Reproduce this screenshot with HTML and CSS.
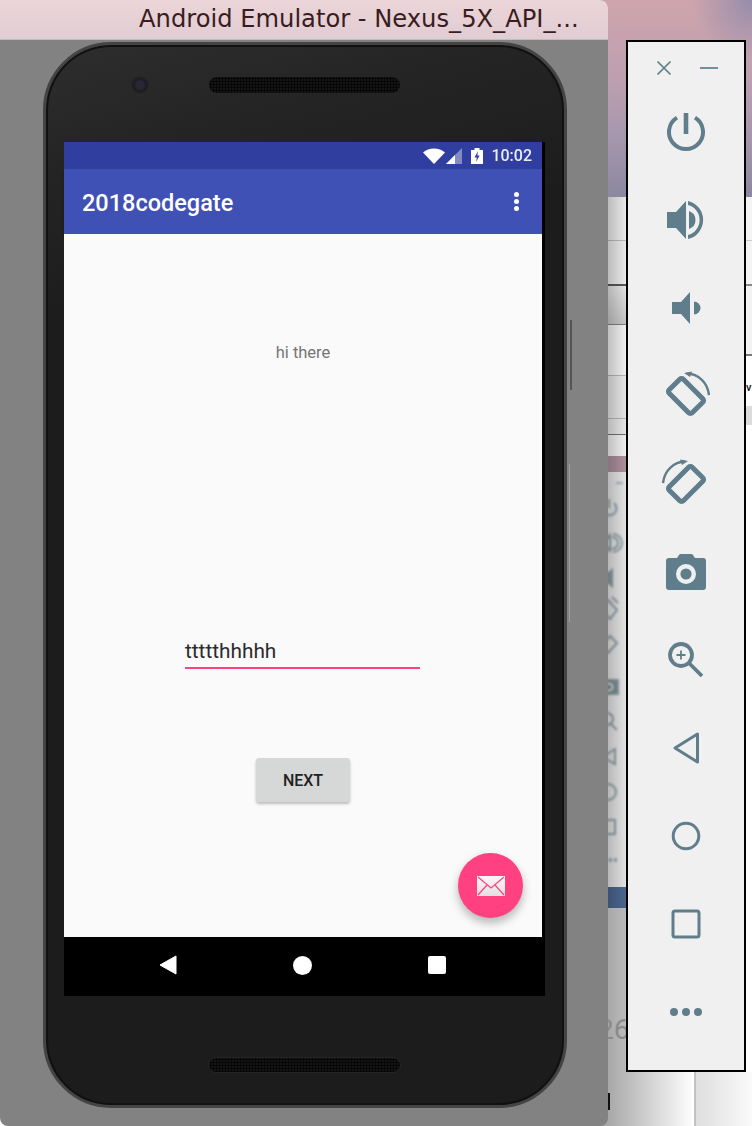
FILE: index.html
```html
<!DOCTYPE html>
<html lang="en">
<head>
    <meta charset="UTF-8">
    <title>Android Emulator - Nexus_5X_API</title>
    <link rel="stylesheet" href="styles.css">
</head>
<body>
    <div class="desktop">
        <!-- blurred stuff behind the windows -->
        <div class="backdrop">
            <div class="wallpaper"></div>
            <div class="behind-app">
                <div class="behind-left">
                    <div class="left-row lr-a"></div>
                    <div class="left-row lr-b"></div>
                    <div class="left-row lr-c"></div>
                    <div class="left-row lr-d"></div>
                    <div class="left-row lr-e"></div>
                    <div class="left-row lr-f"></div>
                    <div class="left-row lr-g"></div>
                    <div class="left-row lr-band"></div>
                    <div class="left-row lr-tools">
                        <svg class="ghost-tools" width="26" height="415" viewBox="0 0 26 415">
                            <path d="M16 11h7" stroke-width="1.5"/>
                            <path d="M5 31a7 7 0 1 0 9 0M9 27v9"/>
                            <path d="M2 66h6l2-4v18l-2-4H2zM12 65a6 6 0 0 1 0 12M13 62a9 9 0 0 1 0 18"/>
                            <path d="M4 101h5l3-3v16l-3-3H4z" fill="#5f7b88"/>
                            <path d="M8 128l9 10-7 9-9-10zM12 125l6 6"/>
                            <path d="M10 164l7 7-9 10-6-7z"/>
                            <path d="M0 208h18v14H0z" fill="#47626f"/>
                            <circle cx="9" cy="215" r="3.5" stroke="#e6e6e6"/>
                            <circle cx="7" cy="247" r="6"/>
                            <path d="M11 252l6 6"/>
                            <path d="M15 277v15l-12-7z"/>
                            <circle cx="8" cy="320" r="8"/>
                            <path d="M0 348h15v14H0z"/>
                            <path d="M4 388h14" stroke-dasharray="3 2" stroke-width="3"/>
                        </svg>
                    </div>
                    <div class="left-row lr-blue"></div>
                </div>
                <div class="behind-num">26</div>
                <div class="behind-tick"></div>
                <div class="behind-right">
                    <div class="right-row rr-a"></div>
                    <div class="right-row rr-b"></div>
                    <div class="right-row rr-c"></div>
                    <div class="right-row rr-d">
                        <span class="behind-letter">v</span>
                    </div>
                    <div class="right-row rr-e"></div>
                </div>
            </div>
        </div>

        <div class="emulator">
            <div class="titlebar">Android Emulator - Nexus_5X_API_...</div>
            <div class="emulator-body">
                <div class="side-key key-volume"></div>
                <div class="side-key key-power"></div>
                <div class="phone">
                    <div class="phone-top">
                        <div class="camera"></div>
                        <div class="speaker"></div>
                    </div>
                    <div class="screen">
                        <div class="status-bar">
                            <svg class="status-icon" width="22" height="16" viewBox="0 0 22 16"><path d="M0 4.500C3 2 6.800.6 11 .6s8 1.400 11 3.900L11 16z" fill="#fff"/></svg>
                            <svg class="status-icon" width="18" height="16" viewBox="0 0 18 16"><path d="M17 0v16H1z" fill="#fff" opacity=".4"/><path d="M10 7v9H1z" fill="#fff"/></svg>
                            <svg class="status-icon battery" width="12" height="16" viewBox="0 0 12 16"><path d="M0 2h3.500V0h5v2H12v14H0z" fill="#fff"/><path d="M7 3 3.500 9.500h2.300L5 14l3.600-6.500H6.300z" fill="#303f9f"/></svg>
                            <span class="clock">10:02</span>
                        </div>
                        <div class="app-bar">
                            <span class="app-title">2018codegate</span>
                            <div class="overflow-dots"><i></i><i></i><i></i></div>
                        </div>
                        <div class="content">
                            <p class="hello">hi there</p>
                            <div class="field">ttttthhhhh</div>
                            <button class="next-btn">NEXT</button>
                            <div class="fab">
                                <svg width="28" height="20" viewBox="0 0 28 20">
                                    <defs><linearGradient id="env" x1="0" y1="0" x2="0" y2="1"><stop offset="0" stop-color="#fdf6f8"/><stop offset="1" stop-color="#e2dfe0"/></linearGradient></defs>
                                    <path d="M0 0h28v20H0z" fill="url(#env)"/>
                                    <path d="M1 1 14 12 27 1M1 19l9-10M27 19l-9-10" fill="none" stroke="#ff4081" stroke-width="1.200"/>
                                </svg>
                            </div>
                        </div>
                        <div class="nav-bar">
                            <svg width="18" height="20" viewBox="0 0 18 20"><path d="M17 1v18L1 10z" fill="#fff" stroke="#fff" stroke-linejoin="round"/></svg>
                            <div class="nav-home"></div>
                            <div class="nav-recent"></div>
                        </div>
                    </div>
                    <div class="phone-bottom">
                        <div class="speaker"></div>
                    </div>
                </div>
            </div>
        </div>

        <div class="toolbar">
            <div class="win-controls">
                <svg width="16" height="16" viewBox="0 0 16 16"><path d="M1.500 1.500l13 13M14.500 1.500l-13 13" stroke="#607d8b" stroke-width="1.700" fill="none"/></svg>
                <svg width="18" height="16" viewBox="0 0 18 16"><path d="M0 8h18" stroke="#607d8b" stroke-width="1.700" fill="none"/></svg>
            </div>
            <div class="tool">
                <svg width="40" height="40" viewBox="0 0 40 40"><path d="M11 5.600A17 17 0 1 0 29 5.600" fill="none" stroke="#607d8b" stroke-width="4"/><path d="M20 1v21" stroke="#607d8b" stroke-width="4.600" fill="none"/></svg>
            </div>
            <div class="tool">
                <svg width="40" height="40" viewBox="0 0 40 40"><path d="M1 12h9L20 1v38L10 28H1z" fill="#607d8b"/><path d="M23 11a9.500 9.500 0 0 1 0 18z" fill="#607d8b"/><path d="M22 1a19.500 19.500 0 0 1 0 38v-4a15.500 15.500 0 0 0 0-30z" fill="#607d8b"/></svg>
            </div>
            <div class="tool">
                <svg width="30" height="34" viewBox="0 0 30 34"><path d="M1 11h9L19 1v32L10 23H1z" fill="#607d8b"/><path d="M23 10.500a6.500 6.500 0 0 1 0 13z" fill="#607d8b"/></svg>
            </div>
            <div class="tool">
                <svg width="48" height="50" viewBox="0 0 48 50"><rect x="14" y="8.750" width="20" height="32.500" rx="2.500" transform="rotate(-45 24 25)" fill="none" stroke="#607d8b" stroke-width="5"/><path d="M25 2.500C36 3 45.500 11 47 24" fill="none" stroke="#607d8b" stroke-width="2.400"/><path d="M22 2l8-1.500-2 5.500z" fill="#607d8b"/></svg>
            </div>
            <div class="tool">
                <svg width="48" height="50" viewBox="0 0 48 50"><rect x="14" y="8.750" width="20" height="32.500" rx="2.500" transform="rotate(45 24 25)" fill="none" stroke="#607d8b" stroke-width="5"/><path d="M23 2.500C12 3 2.500 11 1 24" fill="none" stroke="#607d8b" stroke-width="2.400"/><path d="M26 2l-8-1.500 2 5.500z" fill="#607d8b"/></svg>
            </div>
            <div class="tool">
                <svg width="40" height="36" viewBox="0 0 40 36"><path d="M3 4h8l2-3q.5-1 2-1h10q1.500 0 2 1l2 3h8a3 3 0 0 1 3 3v26a3 3 0 0 1-3 3H3a3 3 0 0 1-3-3V7a3 3 0 0 1 3-3z" fill="#607d8b"/><circle cx="20" cy="20" r="7.800" fill="none" stroke="#f0f0f0" stroke-width="4.400"/></svg>
            </div>
            <div class="tool">
                <svg width="36" height="36" viewBox="0 0 36 36"><circle cx="13" cy="13" r="11" fill="none" stroke="#607d8b" stroke-width="3.800"/><path d="M21 21l13 13" stroke="#607d8b" stroke-width="3.800" fill="none"/><path d="M13 8.500v9M8.500 13h9" stroke="#607d8b" stroke-width="1.800" fill="none"/></svg>
            </div>
            <div class="tool">
                <svg width="28" height="34" viewBox="0 0 28 34"><path d="M25.500 3v28L3 17z" fill="none" stroke="#607d8b" stroke-width="3" stroke-linejoin="round"/></svg>
            </div>
            <div class="tool">
                <svg width="30" height="30" viewBox="0 0 30 30"><circle cx="15" cy="15" r="12.800" fill="none" stroke="#607d8b" stroke-width="3"/></svg>
            </div>
            <div class="tool">
                <svg width="30" height="30" viewBox="0 0 30 30"><rect x="2" y="2" width="26" height="26" rx="2" fill="none" stroke="#607d8b" stroke-width="3"/></svg>
            </div>
            <div class="tool">
                <svg width="34" height="10" viewBox="0 0 34 10"><circle cx="5" cy="5" r="4" fill="#607d8b"/><circle cx="17" cy="5" r="4" fill="#607d8b"/><circle cx="29" cy="5" r="4" fill="#607d8b"/></svg>
            </div>
        </div>
    </div>
</body>
</html>
```

FILE: styles.css
```css
* {
    box-sizing: border-box;
}
html, body {
    margin: 0;
    height: 100%;
}
body {
    font-family: 'Roboto', sans-serif;
    overflow: hidden;
}
.desktop {
    position: relative;
    width: 752px;
    height: 1126px;
    overflow: hidden;
    background-color: #fff;
}

/* things behind the windows */
.backdrop {
    position: absolute;
    top: 0;
    left: 600px;
    width: 152px;
    height: 1126px;
}
.wallpaper {
    height: 197px;
    background:
        radial-gradient(circle at 100% 0, #958cab 0, rgba(149, 140, 171, 0) 60px),
        linear-gradient(180deg, #cfa5ac 0%, #bd9fb0 40%, #a596ad 70%, #8b889f 100%);
}
.behind-app {
    position: relative;
    height: 929px;
    background: linear-gradient(90deg, #a8a8a8 8px, #fff 94px, #c2c2c2 94px, #c2c2c2 96px, #dedede 96px, #fafafa 152px);
}
.behind-left {
    position: relative;
    width: 26px;
}
.behind-left::after {
    content: "";
    position: absolute;
    top: 0;
    bottom: 0;
    left: 0;
    width: 26px;
    background: linear-gradient(90deg, rgba(0, 0, 0, 0.24) 8px, rgba(0, 0, 0, 0.06) 26px);
}
.left-row {
    background-color: #f7f7f7;
}
.lr-a { height: 44px; border-bottom: 1px solid #c4c4c4; }
.lr-b { height: 45px; border-bottom: 2px solid #5c5c5c; }
.lr-c { height: 39px; background: linear-gradient(180deg, #f0f0f0, #cfcfcf); border-bottom: 1px solid #888; }
.lr-d { height: 51px; background-color: #fdfdfd; border-bottom: 1px solid #c0c0c0; }
.lr-e { height: 43px; border-bottom: 1px solid #c0c0c0; background-color: #f2f2f2; }
.lr-f { height: 16px; border-bottom: 1px solid #777; background-color: #f2f2f2; }
.lr-g { height: 21px; background-color: #fdfdfd; }
.lr-band { height: 16px; background-color: #b596a6; }
.lr-tools {
    height: 415px;
    background-color: #f0f0f0;
    overflow: hidden;
}
.lr-blue {
    height: 21px;
    background-color: #4f6c98;
}
.ghost-tools {
    display: block;
    fill: none;
    stroke: #5f7b88;
    stroke-width: 2;
    filter: blur(1px);
    opacity: 0.65;
}
.behind-num {
    position: absolute;
    top: 817px;
    left: -2px;
    font-size: 28px;
    line-height: 32px;
    color: #8a8a8a;
}
.behind-tick {
    position: absolute;
    top: 896px;
    left: 8px;
    width: 2px;
    height: 17px;
    background-color: #111;
}
.behind-right {
    position: absolute;
    top: 0;
    right: 0;
    width: 6px;
    height: 875px;
    background-color: #fff;
}
.right-row {
    background-color: #fff;
}
.rr-a { height: 44px; background-color: #f4f4f4; border-bottom: 1px solid #ccc; }
.rr-b { height: 45px; background-color: #f4f4f4; border-bottom: 2px solid #888; }
.rr-c { height: 70px; background-color: #f2f2f2; border-bottom: 2px solid #777; }
.rr-d { height: 50px; }
.rr-e { height: 19px; background-color: #dcdcdc; }
.behind-letter {
    display: block;
    padding-top: 25px;
    font-size: 11px;
    line-height: 14px;
    font-weight: 500;
    color: #111;
}

/* emulator window */
.emulator {
    position: absolute;
    top: 0;
    left: 0;
    width: 608px;
    height: 1126px;
    display: flex;
    flex-direction: column;
    border-radius: 0 8px 8px 8px;
    overflow: hidden;
    background-color: #828282;
}
.titlebar {
    height: 40px;
    padding-left: 139px;
    background: linear-gradient(180deg, #ebd5d8, #e0ccd3);
    border-bottom: 1px solid #c9b8bc;
    color: #3a1c20;
    font-family: 'DejaVu Sans', sans-serif;
    font-size: 24.2px;
    line-height: 39px;
    white-space: nowrap;
}
.emulator-body {
    position: relative;
    flex: 1;
    padding: 2px 0 0 43px;
}
.side-key {
    position: absolute;
    background-color: #555;
}
.key-volume {
    top: 280px;
    left: 570px;
    width: 2px;
    height: 70px;
}
.key-power {
    top: 424px;
    left: 569px;
    width: 1px;
    height: 158px;
    background-color: #a0a0a0;
}
.phone {
    width: 524px;
    height: 1066px;
    border: 3px solid #444;
    border-radius: 68px;
    background: linear-gradient(165deg, #2e2e2e 0, #252525 110px, #1c1c1c 280px);
    display: flex;
    flex-direction: column;
    box-shadow: inset 0 0 0 2px #111;
}
.phone-top {
    position: relative;
    height: 97px;
    display: flex;
    justify-content: center;
    padding-top: 32px;
}
.camera {
    position: absolute;
    top: 30px;
    left: 84px;
    width: 20px;
    height: 20px;
    border-radius: 50%;
    background: radial-gradient(circle, #2a2636 0 25%, #1c1c20 45%, #2e2e2e 75%, #363636 100%);
}
.speaker {
    width: 191px;
    height: 16px;
    margin-right: 1px;
    border-radius: 8px;
    background-color: #151515;
    background-image: radial-gradient(circle, #070707 1px, transparent 1.2px);
    background-size: 3px 3px;
}
.screen {
    margin-left: 18px;
    width: 481px;
    height: 854px;
    display: flex;
    flex-direction: column;
    background-color: #000;
}
.status-bar {
    height: 27px;
    width: 478px;
    background-color: #303f9f;
    display: flex;
    align-items: center;
    justify-content: flex-end;
    padding-right: 10px;
    color: #fff;
}
.status-icon {
    flex: none;
}
.battery {
    margin: 0 8px;
}
.clock {
    font-size: 16px;
    font-weight: 500;
    opacity: .9;
}
.app-bar {
    height: 65px;
    width: 478px;
    background-color: #3f51b5;
    display: flex;
    align-items: center;
    justify-content: space-between;
    padding: 0 23px 0 18px;
    box-shadow: 0 2px 3px rgba(0, 0, 0, 0.25);
    position: relative;
    color: #fff;
}
.app-title {
    padding-top: 3px;
    font-size: 23.5px;
    font-weight: 500;
}
.overflow-dots {
    display: flex;
    flex-direction: column;
    gap: 1.7px;
}
.overflow-dots i {
    width: 5px;
    height: 5px;
    border-radius: 50%;
    background-color: #fff;
}
.content {
    position: relative;
    width: 478px;
    height: 703px;
    background-color: #fafafa;
    display: flex;
    flex-direction: column;
    align-items: center;
}
.hello {
    margin: 109px 0 0;
    font-size: 16.5px;
    line-height: 20px;
    color: #757575;
}
.field {
    margin: 277px 1px 0 0;
    width: 235px;
    height: 29px;
    border-bottom: 2px solid #ff4081;
    font-size: 20.8px;
    line-height: 23px;
    color: #2b2b2b;
}
.next-btn {
    margin-top: 89px;
    width: 94px;
    height: 44px;
    border: none;
    border-radius: 3px;
    background-color: #d6d7d7;
    box-shadow: 0 2px 3px rgba(0, 0, 0, 0.25);
    font-family: 'Roboto', sans-serif;
    font-size: 16px;
    font-weight: 500;
    color: #222;
}
.fab {
    position: absolute;
    right: 19px;
    top: 619px;
    width: 65px;
    height: 65px;
    border-radius: 50%;
    background-color: #ff4081;
    box-shadow: 0 5px 10px rgba(0, 0, 0, 0.28);
    display: flex;
    align-items: center;
    justify-content: center;
}
.nav-bar {
    height: 59px;
    display: flex;
    align-items: center;
    justify-content: space-between;
    padding: 0 99px 3px 95px;
}
.nav-home {
    width: 19px;
    height: 19px;
    border-radius: 50%;
    background-color: #fff;
}
.nav-recent {
    width: 18px;
    height: 18px;
    border-radius: 2px;
    background-color: #fff;
}
.phone-bottom {
    flex: 1;
    display: flex;
    justify-content: center;
    padding-top: 61px;
}
.phone-bottom .speaker {
    width: 193px;
    border: 1px solid #262626;
}

/* emulator side toolbar */
.toolbar {
    position: absolute;
    top: 40px;
    left: 626px;
    width: 120px;
    height: 1032px;
    border: 2px solid #000;
    background-color: #f0f0f0;
    display: flex;
    flex-direction: column;
    align-items: center;
}
.win-controls {
    width: 100%;
    height: 46px;
    padding: 18px 26px 0 28px;
    display: flex;
    align-items: flex-start;
    justify-content: space-between;
}
.tool {
    flex: none;
    height: 88px;
    display: flex;
    align-items: center;
    justify-content: center;
}
```
